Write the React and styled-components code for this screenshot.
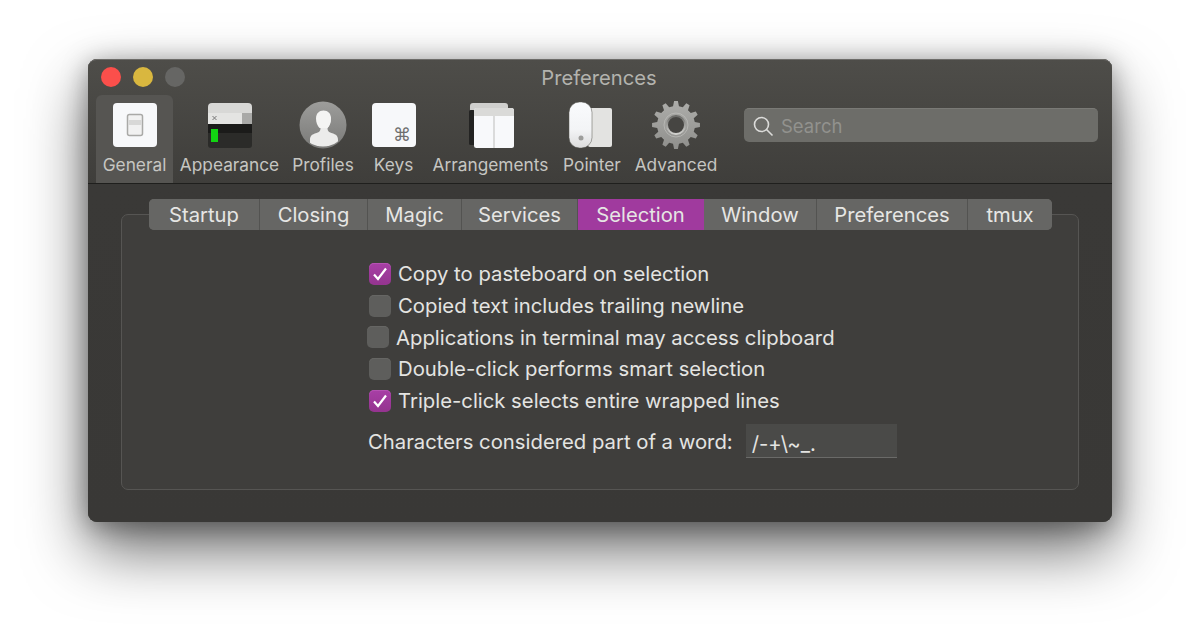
import React from "react";
import styled, { createGlobalStyle } from "styled-components";

const Global = createGlobalStyle`
  html, body { margin: 0; padding: 0; background: #fff; height: 100%; overflow: hidden; }
  #root { height: 100%; }
  * { box-sizing: border-box; }
`;

const Page = styled.div`
  height: 639px;
  padding: 59px 88px 0;
  background: #fff;
  font-family: Inter, "Liberation Sans", sans-serif;
  -webkit-font-smoothing: antialiased;
`;
const Win = styled.div`
  position: relative;
  width: 1024px;
  height: 463px;
  border-radius: 9px;
  background: #3b3a38;
  box-shadow: inset 0 1px 0 #6d6c69, inset 0 0 0 1px #575653,
    0 28px 62px rgba(0, 0, 0, 0.58), 0 4px 26px rgba(0, 0, 0, 0.35);
  display: flex;
  flex-direction: column;
`;
const Head = styled.header`
  height: 125px;
  flex: none;
  padding: 0 8px;
  border-radius: 9px 9px 0 0;
  background: linear-gradient(#4e4d49, #3f3e3b);
  border-top: 1px solid #6d6c69;
  border-bottom: 1px solid #1f1f1d;
  display: flex;
  flex-direction: column;
`;
const TitleBar = styled.div`
  position: relative;
  height: 35px;
  flex: none;
  display: flex;
  align-items: center;
  justify-content: center;
`;
const Lights = styled.div`
  position: absolute;
  left: 5px;
  top: 7px;
  display: flex;
  gap: 12px;
`;
const Light = styled.span`
  width: 20px;
  height: 20px;
  border-radius: 50%;
  background: ${(p) => p.$c};
`;
const Title = styled.div`
  font-size: 20.2px;
  color: #b3b3ae;
  margin-left: -2px;
`;
const ToolRow = styled.div`
  display: flex;
  align-items: stretch;
  height: 88px;
`;
const ToolItem = styled.div`
  display: flex;
  flex-direction: column;
  align-items: center;
  width: ${(p) => p.$w}px;
  margin-right: ${(p) => p.$gap || 0}px;
  border-radius: 6px 6px 0 0;
  background: ${(p) => (p.$on ? "#565552" : "transparent")};
  padding-top: 6px;
`;
const ToolLabel = styled.span`
  font-size: 17.3px;
  line-height: 22px;
  margin-top: 5px;
  color: #c6c6c2;
  white-space: nowrap;
`;
const SearchBox = styled.div`
  width: 354px;
  height: 34px;
  margin-left: 27px;
  margin-top: 13px;
  border-radius: 5px;
  background: #6d6d69;
  border-top: 1px solid #7a7a76;
  display: flex;
  align-items: center;
  padding-left: 8px;
  gap: 7px;
`;
const SearchText = styled.span`
  font-size: 18.5px;
  color: #92928e;
`;
const Body = styled.div`
  flex: 1;
  position: relative;
  padding: 30px 33px 32px;
  background: linear-gradient(#3a3937, #393836);
  border-radius: 0 0 9px 9px;
`;
const Panel = styled.div`
  height: 100%;
  border: 1px solid #565553;
  border-radius: 7px;
  background: #3f3e3c;
  position: relative;
  padding: 43px 0 0 247px;
`;
const Tabs = styled.div`
  position: absolute;
  left: 27px;
  top: -16px;
  display: flex;
  height: 31px;
  border-radius: 5px;
  overflow: hidden;
  background: #666664;
`;
const Tab = styled.div`
  width: ${(p) => p.$w}px;
  display: flex;
  align-items: center;
  justify-content: center;
  font-size: 20.2px;
  color: #e6e6e4;
  background: ${(p) => (p.$on ? "#a03a9e" : "#666664")};
  border-right: 1px solid ${(p) => (p.$on ? "#a03a9e" : "#535351")};
  &:last-child { border-right: 0; }
`;
const Rows = styled.div`
  display: flex;
  flex-direction: column;
`;
const Row = styled.label`
  height: 31.7px;
  display: flex;
  align-items: center;
  gap: 7px;
  font-size: 20.3px;
  color: #e4e4e2;
  white-space: nowrap;
  margin-left: ${(p) => p.$shift || 0}px;
`;
const Check = styled.span`
  width: 22px;
  height: 22px;
  border-radius: 5px;
  flex: none;
  display: flex;
  align-items: center;
  justify-content: center;
  background: ${(p) => (p.$on ? "linear-gradient(#a83fa6,#94348f)" : "#5e5e5c")};
  box-shadow: inset 0 1px 0 ${(p) => (p.$on ? "#b552b3" : "#666664")};
`;
const WordRow = styled.div`
  display: flex;
  align-items: center;
  height: 34px;
  margin-top: 8px;
  margin-left: -1px;
  font-size: 20.3px;
  color: #e4e4e2;
  white-space: nowrap;
`;
const Field = styled.div`
  width: 151px;
  height: 34px;
  margin-left: 13px;
  padding: 5px 6px 0;
  background: #4a4a48;
  border-bottom: 1px solid #6a6a68;
  display: flex;
  align-items: center;
`;

const gearPath = (() => {
  const n = 12, R = 24, r = 19, cx = 24, cy = 24;
  let d = "";
  for (let i = 0; i < n; i++) {
    const a = (i / n) * Math.PI * 2;
    const s = (Math.PI * 2) / n;
    const pts = [
      [r, a - s * 0.3],
      [R, a - s * 0.15],
      [R, a + s * 0.15],
      [r, a + s * 0.3],
    ];
    pts.forEach(([q, t], k) => {
      d += `${i === 0 && k === 0 ? "M" : "L"}${(cx + q * Math.sin(t)).toFixed(2)} ${(cy - q * Math.cos(t)).toFixed(2)}`;
    });
  }
  return d + "Z M24 15a9 9 0 1 0 0 18a9 9 0 1 0 0-18Z";
})();

const IconGeneral = () => (
  <svg width="48" height="48" viewBox="0 0 48 48">
    <rect x="2" y="2" width="44" height="44" rx="4" fill="#f7f8fa" />
    <rect x="16.500" y="13.500" width="15" height="21" rx="2" fill="#f1f1f1" stroke="#a9a9a7" strokeWidth="1.500" />
    <rect x="17.500" y="19" width="13" height="5" fill="#d8d8d7" />
  </svg>
);
const IconAppearance = () => (
  <svg width="48" height="48" viewBox="0 0 48 48">
    <path d="M2 6a4 4 0 0 1 4-4h36a4 4 0 0 1 4 4v6H2z" fill="#d8d8d6" />
    <rect x="2" y="12" width="44" height="11" fill="#e4e4e2" />
    <rect x="36" y="12" width="10" height="11" fill="#a9a9a7" />
    <path d="M6.500 15l4 4M10.500 15l-4 4" stroke="#777" strokeWidth="1" />
    <path d="M2 23h44v21a3 3 0 0 1-3 3H5a3 3 0 0 1-3-3z" fill="#2b2b29" />
    <rect x="2" y="23" width="44" height="9" fill="#1b1b1a" />
    <rect x="5" y="28" width="7" height="13" fill="#12d412" />
  </svg>
);
const IconProfiles = () => (
  <svg width="48" height="48" viewBox="0 0 48 48">
    <defs>
      <linearGradient id="pg" x1="0" y1="0" x2="0" y2="1">
        <stop offset="0" stopColor="#9d9d9b" />
        <stop offset="1" stopColor="#7a7a78" />
      </linearGradient>
      <clipPath id="pc"><ellipse cx="24" cy="30" rx="20" ry="15.500" /></clipPath>
    </defs>
    <circle cx="24" cy="24" r="23.500" fill="url(#pg)" />
    <g clipPath="url(#pc)">
      <path d="M24.500 9.500c4.500 0 7.500 3 7.500 8 0 4-1.500 7.500-3.500 9.500 0 3 1 4 4 5 5 1.500 6.500 3 6.500 7v9H11v-9c0-4 1.500-5.500 6.500-7 3-1 4-2 4-5-2-2-3.500-5.500-3.500-9.500 0-5 3-8 6.500-8z" fill="#ececeb" />
    </g>
    <path d="M24.500 9.500c4.500 0 7.500 3 7.500 8 0 4-1.500 7.500-3.500 9.500h-8c-2-2-3.500-5.500-3.500-9.500 0-5 3-8 7.500-8z" fill="#f4f4f3" />
  </svg>
);
const IconKeys = () => (
  <svg width="48" height="48" viewBox="0 0 48 48">
    <rect x="2" y="2" width="44" height="44" rx="4" fill="#f7f8fa" />
    <text x="32" y="40" textAnchor="middle" fontSize="18" fill="#6e6e6e" fontFamily="DejaVu Sans">⌘</text>
  </svg>
);
const IconArr = () => (
  <svg width="48" height="48" viewBox="0 0 48 48">
    <path d="M3 5a3 3 0 0 1 3-3h32a3 3 0 0 1 3 3v5H3z" fill="#cfcfcd" />
    <rect x="2" y="9" width="6" height="35" rx="1.500" fill="#232322" />
    <rect x="7" y="7" width="40" height="40" rx="2.500" fill="#f8f9fb" />
    <path d="M7 9.500a2.500 2.500 0 0 1 2.500-2.500h35a2.500 2.500 0 0 1 2.500 2.500V15H7z" fill="#dadad8" />
    <path d="M27 15v32" stroke="#bdbdbb" strokeWidth="1" />
  </svg>
);
const IconPointer = () => (
  <svg width="48" height="48" viewBox="0 0 48 48">
    <defs>
      <linearGradient id="mg" x1="0" y1="0" x2="0" y2="1">
        <stop offset="0" stopColor="#fafbfd" />
        <stop offset="0.6" stopColor="#f3f4f6" />
        <stop offset="1" stopColor="#dcdcdc" />
      </linearGradient>
    </defs>
    <rect x="20" y="7" width="24" height="39" rx="2" fill="#e3e3e1" />
    <rect x="1" y="1" width="23" height="46" rx="10.500" fill="url(#mg)" stroke="#55554f" strokeWidth="0.500" />
    <circle cx="13" cy="37" r="2.500" fill="#9d9d9b" />
  </svg>
);
const IconGear = () => (
  <svg width="48" height="48" viewBox="0 0 48 48">
    <defs>
      <linearGradient id="gg" x1="0" y1="0" x2="0" y2="1">
        <stop offset="0" stopColor="#adadaa" />
        <stop offset="1" stopColor="#8f8f8c" />
      </linearGradient>
      <linearGradient id="gr" x1="0" y1="0" x2="0" y2="1">
        <stop offset="0" stopColor="#6a6a67" />
        <stop offset="1" stopColor="#d2d2cf" />
      </linearGradient>
    </defs>
    <path d={gearPath} fill="url(#gg)" fillRule="evenodd" />
    <circle cx="24" cy="24" r="12" fill="none" stroke="#c4c4c1" strokeWidth="1" opacity="0.6" />
    <circle cx="24" cy="24" r="9" fill="#464542" stroke="url(#gr)" strokeWidth="2" />
  </svg>
);
const SearchIcon = () => (
  <svg width="22" height="22" viewBox="0 0 22 22" fill="none" stroke="#dcdcda" strokeWidth="1.600">
    <circle cx="9.500" cy="9.500" r="7" />
    <path d="M14.500 14.500l6 6" />
  </svg>
);
const Tick = () => (
  <svg width="16" height="14" viewBox="0 0 16 14" fill="none" stroke="#fff" strokeWidth="2.200">
    <path d="M2 7.500l4 4.500 8-10.500" />
  </svg>
);

const tools = [
  ["General", 77, 7, <IconGeneral key="g" />, true],
  ["Appearance", 99, 13, <IconAppearance key="a" />],
  ["Profiles", 62, 20, <IconProfiles key="p" />],
  ["Keys", 39, 19, <IconKeys key="k" />],
  ["Arrangements", 117, 14, <IconArr key="r" />],
  ["Pointer", 58, 14, <IconPointer key="o" />],
  ["Advanced", 82, 0, <IconGear key="v" />],
];
const tabs = [
  ["Startup", 111], ["Closing", 108], ["Magic", 94], ["Services", 116],
  ["Selection", 126, true], ["Window", 113], ["Preferences", 151], ["tmux", 84],
];
const rows = [
  ["Copy to pasteboard on selection", true, 0],
  ["Copied text includes trailing newline", false, 0],
  ["Applications in terminal may access clipboard", false, -2],
  ["Double-click performs smart selection", false, 0],
  ["Triple-click selects entire wrapped lines", true, 0],
];

export default function App() {
  return (
    <Page>
      <Global />
      <Win>
        <Head>
          <TitleBar>
            <Lights>
              <Light $c="#fb4f4b" />
              <Light $c="#d9b73f" />
              <Light $c="#666664" />
            </Lights>
            <Title>Preferences</Title>
          </TitleBar>
          <ToolRow>
            {tools.map(([label, w, gap, icon, on]) => (
              <ToolItem key={label} $w={w} $gap={gap} $on={on}>
                {icon}
                <ToolLabel>{label}</ToolLabel>
              </ToolItem>
            ))}
            <SearchBox>
              <SearchIcon />
              <SearchText>Search</SearchText>
            </SearchBox>
          </ToolRow>
        </Head>
        <Body>
          <Panel>
            <Tabs>
              {tabs.map(([t, w, on]) => (
                <Tab key={t} $w={w} $on={on}>{t}</Tab>
              ))}
            </Tabs>
            <Rows>
              {rows.map(([t, on, shift]) => (
                <Row key={t} $shift={shift}>
                  <Check $on={on}>{on && <Tick />}</Check>
                  {t}
                </Row>
              ))}
            </Rows>
            <WordRow>
              Characters considered part of a word:
              <Field>/-+\~_.</Field>
            </WordRow>
          </Panel>
        </Body>
      </Win>
    </Page>
  );
}
